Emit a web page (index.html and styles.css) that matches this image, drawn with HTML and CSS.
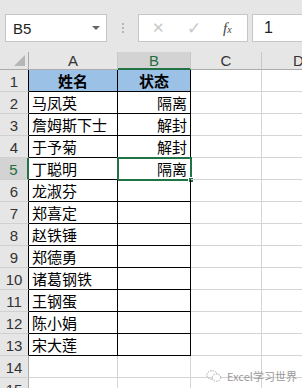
FILE: index.html
```html
<!DOCTYPE html>
<html>
<head>
<meta charset="utf-8">
<link rel="stylesheet" href="styles.css">
</head>
<body>
<div class="toolbar">
  <div class="namebox"><span class="nb-text">B5</span><span class="nb-arrow"></span></div>
  <div class="dots"><i></i><i></i><i></i></div>
  <div class="fbtns">
    <span class="fb-x">✕</span>
    <span class="fb-ok">✓</span>
    <span class="fb-fx"><i>f</i><sub>x</sub></span>
  </div>
  <div class="finput">1</div>
</div>
<div class="sheet">
  <div class="row colhead">
    <div class="rh corner"><span class="tri"></span></div>
    <div class="c ca">A</div>
    <div class="c cb sel">B</div>
    <div class="c cc">C</div>
    <div class="c cd"><span class="dlabel">D</span></div>
  </div>
  <div class="row tbl"><div class="rh">1</div><div class="c ca hd">姓名</div><div class="c cb hd">状态</div><div class="c cc"></div><div class="c cd"></div></div>
  <div class="row tbl"><div class="rh">2</div><div class="c ca">马凤英</div><div class="c cb r">隔离</div><div class="c cc"></div><div class="c cd"></div></div>
  <div class="row tbl"><div class="rh">3</div><div class="c ca">詹姆斯下士</div><div class="c cb r">解封</div><div class="c cc"></div><div class="c cd"></div></div>
  <div class="row tbl"><div class="rh">4</div><div class="c ca">于予菊</div><div class="c cb r">解封</div><div class="c cc"></div><div class="c cd"></div></div>
  <div class="row tbl"><div class="rh rsel">5</div><div class="c ca">丁聪明</div><div class="c cb r active">隔离<span class="handle"></span></div><div class="c cc"></div><div class="c cd"></div></div>
  <div class="row tbl"><div class="rh">6</div><div class="c ca">龙淑芬</div><div class="c cb"></div><div class="c cc"></div><div class="c cd"></div></div>
  <div class="row tbl"><div class="rh">7</div><div class="c ca">郑喜定</div><div class="c cb"></div><div class="c cc"></div><div class="c cd"></div></div>
  <div class="row tbl"><div class="rh">8</div><div class="c ca">赵铁锤</div><div class="c cb"></div><div class="c cc"></div><div class="c cd"></div></div>
  <div class="row tbl"><div class="rh">9</div><div class="c ca">郑德勇</div><div class="c cb"></div><div class="c cc"></div><div class="c cd"></div></div>
  <div class="row tbl"><div class="rh">10</div><div class="c ca">诸葛钢铁</div><div class="c cb"></div><div class="c cc"></div><div class="c cd"></div></div>
  <div class="row tbl"><div class="rh">11</div><div class="c ca">王钢蛋</div><div class="c cb"></div><div class="c cc"></div><div class="c cd"></div></div>
  <div class="row tbl"><div class="rh">12</div><div class="c ca">陈小娟</div><div class="c cb"></div><div class="c cc"></div><div class="c cd"></div></div>
  <div class="row tbl"><div class="rh">13</div><div class="c ca">宋大莲</div><div class="c cb"></div><div class="c cc"></div><div class="c cd"></div></div>
  <div class="row"><div class="rh">14</div><div class="c ca"></div><div class="c cb"></div><div class="c cc"></div><div class="c cd"></div></div>
  <div class="row"><div class="rh">15</div><div class="c ca"></div><div class="c cb"></div><div class="c cc"></div><div class="c cd"></div></div>
  <div class="watermark">
    <svg width="16" height="14" viewBox="0 0 16 14"><ellipse cx="6" cy="6" rx="5.2" ry="4.3" fill="none" stroke="#aaa" stroke-width="1" stroke-dasharray="1.5 1"/><ellipse cx="10.5" cy="8.6" rx="4.3" ry="3.6" fill="#fff" stroke="#aaa" stroke-width="1" stroke-dasharray="1.5 1"/></svg>
    <span>Excel学习世界</span>
  </div>
</div>
</body>
</html>
```
FILE: styles.css
```css
* { box-sizing: border-box; }
html, body { margin: 0; background: #fff; }
body {
  width: 302px;
  height: 388px;
  overflow: hidden;
  font-family: "Noto Sans CJK SC", "Liberation Sans", sans-serif;
}
.toolbar {
  height: 52px;
  background: #e6e6e6;
  display: flex;
  align-items: flex-start;
  padding-top: 14px;
  padding-left: 5px;
}
.namebox {
  width: 102px;
  height: 28px;
  background: #fff;
  border: 1px solid #c6c6c6;
  display: flex;
  align-items: center;
  justify-content: space-between;
  padding: 0 6px 0 7px;
  font-family: "Liberation Sans", sans-serif;
  font-size: 15px;
  color: #222;
}
.nb-arrow {
  width: 0; height: 0;
  border-left: 4px solid transparent;
  border-right: 4px solid transparent;
  border-top: 4px solid #666;
}
.dots {
  width: 31px;
  height: 28px;
  display: flex;
  flex-direction: column;
  align-items: center;
  justify-content: center;
  gap: 2px;
}
.dots i {
  width: 2px; height: 2px;
  background: #b5b5b5;
}
.fbtns {
  width: 110px;
  height: 28px;
  background: #fff;
  border: 1px solid #c6c6c6;
  display: flex;
  align-items: center;
  font-family: "Liberation Sans", sans-serif;
}
.fb-x { color: #c8c8c8; font-size: 15px; margin-left: 13px; }
.fb-ok { color: #c8c8c8; font-size: 17px; margin-left: 22px; }
.fb-fx {
  margin-left: 22px;
  font-family: "Liberation Serif", serif;
  font-size: 15px;
  color: #444;
}
.fb-fx i { font-style: italic; }
.fb-fx sub { font-style: italic; font-size: 10px; vertical-align: 0; }
.finput {
  margin-left: 4px;
  flex: 1;
  height: 28px;
  background: #fff;
  border: 1px solid #c6c6c6;
  border-right: none;
  padding-left: 11px;
  font-family: "Liberation Sans", sans-serif;
  font-size: 16px;
  line-height: 26px;
  color: #222;
}
.sheet {
  position: relative;
  width: 302px;
  overflow: hidden;
}
.row {
  display: flex;
  height: 22px;
  width: 302px;
}
.colhead { height: 18px; background: #e6e6e6; }
.rh {
  width: 29px;
  flex: none;
  background: #e6e6e6;
  border-right: 1px solid #ababab;
  border-bottom: 1px solid #d0d0d0;
  font-family: "Liberation Sans", sans-serif;
  font-size: 15px;
  color: #333;
  text-align: center;
  line-height: 23px;
}
.c {
  flex: none;
  height: 100%;
  border-right: 1px solid #d4d4d4;
  border-bottom: 1px solid #d4d4d4;
  font-size: 15px;
  line-height: 21px;
  color: #000;
  white-space: nowrap;
  position: relative;
}
.ca { width: 89px; padding-left: 3px; }
.cb { width: 73px; }
.cc { width: 71px; }
.cd { flex: 1 1 auto; min-width: 0; border-right: none; }
.colhead .rh { border-bottom: 1px solid #ababab; position: relative; }
.colhead .c {
  background: #e6e6e6;
  border-right: 1px solid #c8c8c8;
  border-bottom: 1px solid #ababab;
  font-family: "Liberation Sans", sans-serif;
  font-size: 15px;
  color: #333;
  text-align: center;
  line-height: 18px;
  padding-left: 0;
}
.colhead .c.cd {
  border-right: none;
  text-align: left;
  padding-left: 31px;
  overflow: hidden;
}
.dlabel { display: inline-block; }
.colhead .c.sel {
  background: #d3d3d3;
  color: #216d3e;
  border-bottom: 2px solid #217346;
}
.tri {
  position: absolute;
  right: 3px;
  bottom: 3px;
  width: 0; height: 0;
  border-left: 11px solid transparent;
  border-bottom: 11px solid #b6b6b6;
}
.tbl .rh { border-right: 1px solid #000; }
.tbl .rh.rsel {
  background: #d3d3d3;
  color: #216d3e;
  border-right: 2px solid #217346;
}
.tbl .ca, .tbl .cb {
  border-right: 1px solid #000;
  border-bottom: 1px solid #000;
}
.hd {
  background: #9bc2e6;
  font-weight: bold;
  text-align: center;
  padding-left: 0;
}
.r { text-align: right; padding-right: 3px; }
.active { outline: 2px solid #217346; outline-offset: -1px; }
.handle {
  position: absolute;
  right: -4px;
  bottom: -4px;
  width: 6px;
  height: 6px;
  background: #217346;
  border: 1px solid #fff;
}
.watermark {
  position: absolute;
  left: 206px;
  top: 316px;
  display: flex;
  align-items: center;
  gap: 5px;
  font-size: 11px;
  color: #9a9a9a;
}
```
